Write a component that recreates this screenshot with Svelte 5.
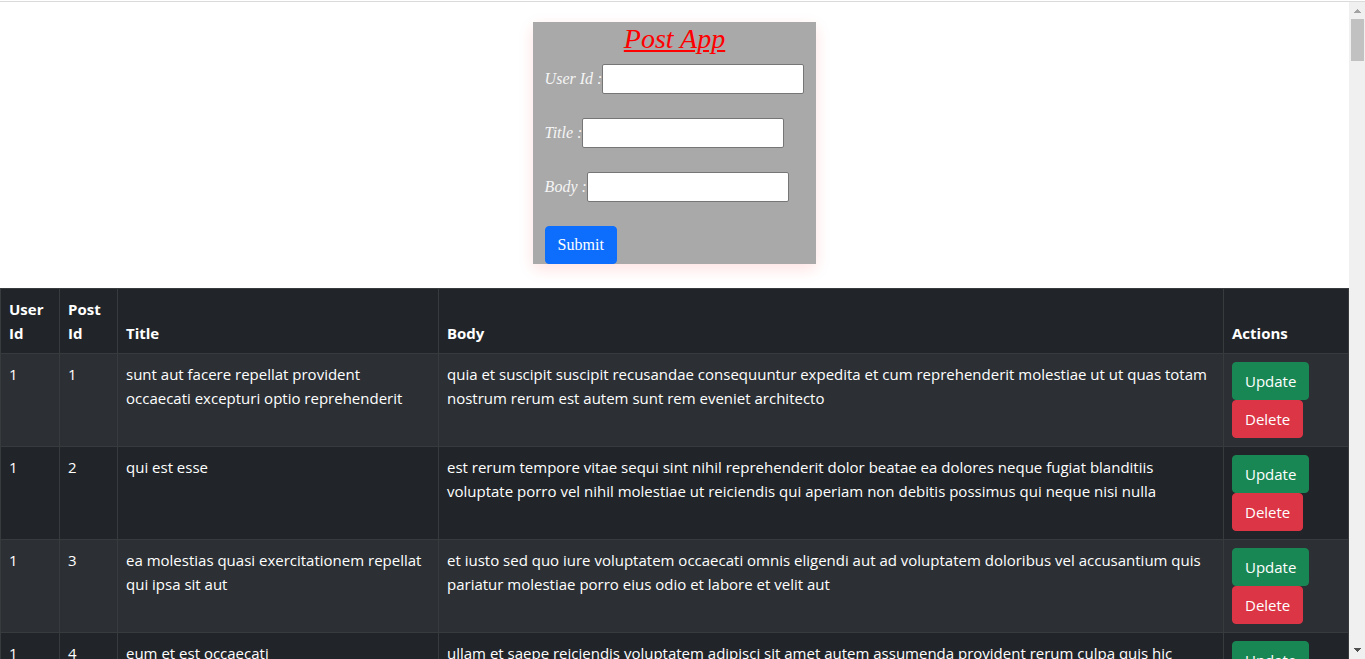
<script>
  const posts = [
    {
      userId: 1,
      id: 1,
      title: 'sunt aut facere repellat provident\noccaecati excepturi optio reprehenderit',
      body: 'quia et suscipit suscipit recusandae consequuntur expedita et cum reprehenderit molestiae ut ut quas totam nostrum rerum est autem sunt rem eveniet architecto'
    },
    {
      userId: 1,
      id: 2,
      title: 'qui est esse',
      body: 'est rerum tempore vitae sequi sint nihil reprehenderit dolor beatae ea dolores neque fugiat blanditiis voluptate porro vel nihil molestiae ut reiciendis qui aperiam non debitis possimus qui neque nisi nulla'
    },
    {
      userId: 1,
      id: 3,
      title: 'ea molestias quasi exercitationem repellat qui ipsa sit aut',
      body: 'et iusto sed quo iure voluptatem occaecati omnis eligendi aut ad voluptatem doloribus vel accusantium quis pariatur molestiae porro eius odio et labore et velit aut'
    },
    {
      userId: 1,
      id: 4,
      title: 'eum et est occaecati',
      body: 'ullam et saepe reiciendis voluptatem adipisci sit amet autem assumenda provident rerum culpa quis hic'
    }
  ];

  let draft = $state({ userId: '', title: '', body: '' });
</script>

<div class="page">
  <main>
    <form onsubmit={(e) => e.preventDefault()}>
      <h1>Post App</h1>
      <div class="field">
        <label for="user-id">User Id :</label>
        <input id="user-id" type="text" bind:value={draft.userId} />
      </div>
      <div class="field">
        <label for="title">Title :</label>
        <input id="title" type="text" bind:value={draft.title} />
      </div>
      <div class="field">
        <label for="body">Body :</label>
        <input id="body" type="text" bind:value={draft.body} />
      </div>
      <button class="btn submit" type="submit">Submit</button>
    </form>

    <table>
      <colgroup>
        <col class="user-col" />
        <col class="post-col" />
        <col class="title-col" />
        <col />
        <col class="actions-col" />
      </colgroup>
      <thead>
        <tr>
          <th>User Id</th>
          <th>Post Id</th>
          <th>Title</th>
          <th>Body</th>
          <th>Actions</th>
        </tr>
      </thead>
      <tbody>
        {#each posts as post (post.id)}
          <tr>
            <td>{post.userId}</td>
            <td>{post.id}</td>
            <td class="post-title">{post.title}</td>
            <td>{post.body}</td>
            <td>
              <div class="actions">
                <button class="btn update" type="button">Update</button>
                <button class="btn delete" type="button">Delete</button>
              </div>
            </td>
          </tr>
        {/each}
      </tbody>
    </table>
  </main>

  <div class="scrollbar" aria-hidden="true">
    <svg width="16" height="17" viewBox="0 0 16 17" shape-rendering="crispEdges">
      <path d="M8 7h1v1h1v1h1v1h1v1H5v-1h1V9h1V8h1z" fill="#a3a3a3" />
    </svg>
    <div class="thumb"></div>
    <svg class="down" width="16" height="17" viewBox="0 0 16 17" shape-rendering="crispEdges">
      <path d="M5 6h7v1h-1v1h-1v1H9v1H8V9H7V8H6V7H5z" fill="#505050" />
    </svg>
  </div>
</div>

<style>
  :global(body) {
    margin: 0;
    background: #fff;
  }

  .page,
  .page * {
    box-sizing: border-box;
  }

  .page {
    display: flex;
    height: 100vh;
    overflow: hidden;
    padding-top: 1px;
    font: 15px/24px 'Segoe UI', 'Open Sans', sans-serif;
    color: #fff;
  }

  main {
    flex: 1;
    min-width: 0;
    display: flex;
    flex-direction: column;
    align-items: center;
    gap: 24px;
    padding-top: 20px;
    border-top: 1px solid #dadada;
  }

  form {
    flex: none;
    padding: 0 12px;
    background: #a9a9a9;
    box-shadow: 0 5px 15px rgba(255, 0, 0, 0.12);
    font: 16px/24px 'Liberation Serif', serif;
  }

  h1 {
    margin: 0 0 8px;
    font-size: 28px;
    line-height: 34px;
    font-weight: 400;
    font-style: italic;
    text-align: center;
    text-decoration: underline;
    color: #f00;
  }

  .field {
    display: flex;
    align-items: center;
    margin-bottom: 24px;
  }

  label {
    font-style: italic;
    color: #f5f5f5;
  }

  input {
    width: 202px;
    height: 30px;
    padding: 1px 2px;
    border: 1px solid #767676;
    border-radius: 2px;
    background: #fff;
    font: inherit;
  }

  .btn {
    display: block;
    padding: 6px 12px;
    border: 1px solid transparent;
    border-radius: 4px;
    font: inherit;
    color: #fff;
    cursor: pointer;
  }

  .submit {
    background: #0d6efd;
    border-color: #0d6efd;
  }

  .update {
    background: #198754;
    border-color: #198754;
  }

  .delete {
    background: #dc3545;
    border-color: #dc3545;
  }

  table {
    width: 100%;
    table-layout: fixed;
    border-collapse: collapse;
    background: #212529;
  }

  .user-col {
    width: 59px;
  }

  .post-col {
    width: 58px;
  }

  .title-col {
    width: 321px;
  }

  .actions-col {
    width: 125px;
  }

  th,
  td {
    padding: 8px;
    border: 1px solid #373b3e;
    text-align: left;
    vertical-align: top;
  }

  th {
    vertical-align: bottom;
    font-weight: 700;
  }

  .post-title {
    white-space: pre-line;
  }

  tbody tr:nth-child(odd) {
    background: #2c3034;
  }

  .actions {
    display: flex;
    flex-direction: column;
    align-items: flex-start;
  }

  .scrollbar {
    flex: none;
    display: flex;
    flex-direction: column;
    width: 16px;
    background: #f0f0f0;
    border-top: 1px solid #dadada;
  }

  .scrollbar svg {
    display: block;
    flex: none;
  }

  .thumb {
    height: 42px;
    margin: 0 1px 0 2px;
    background: #c1c1c1;
  }

  .down {
    margin-top: auto;
  }
</style>
